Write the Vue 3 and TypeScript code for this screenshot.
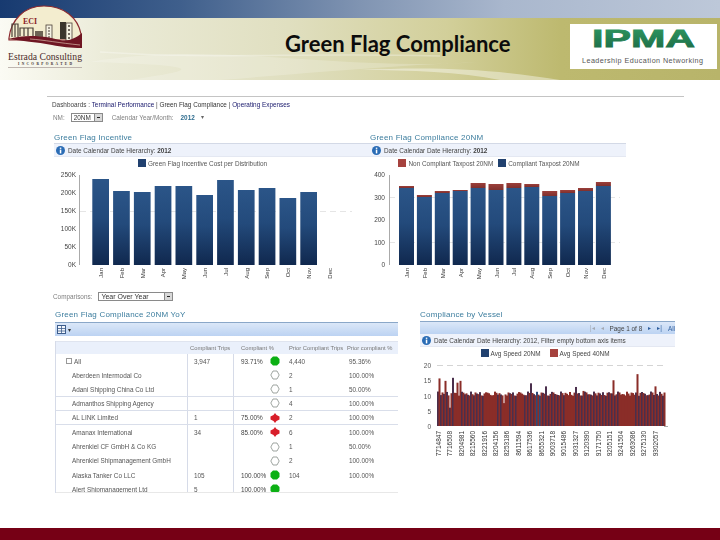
<script setup lang="ts">
const months = ['Jan', 'Feb', 'Mar', 'Apr', 'May', 'Jun', 'Jul', 'Aug', 'Sep', 'Oct', 'Nov', 'Dec'];

const baseY = 265;

// tops read off the reference, page coordinates
const incentive = [179, 191, 192, 186, 186, 195, 180, 190, 188, 198, 192].map((top, i) => ({
	x: 92.3 + i * 20.8,
	top,
	month: months[i],
}));

const complianceTop = [186, 195, 191, 190, 183, 184, 183, 184, 191, 190, 188, 182];
const complianceMid = [188, 197, 193, 191, 188, 190, 188, 187, 196, 193, 191, 186];
const compliance = months.map((month, i) => ({
	x: 399 + i * 17.9,
	top: complianceTop[i],
	mid: complianceMid[i],
	month,
}));

const vesselBase = 428;
const vesselScale = 3.05;
const spikesRed: Record<number, number> = { 0: 15.6, 2: 14.8, 6: 14.2, 7: 14.8, 48: 11.5, 58: 15, 66: 17, 72: 13 };
const spikesBlue: Record<number, number> = { 4: 6, 5: 15.8, 22: 7.5, 31: 14, 36: 13, 46: 12.8 };
const redPatches = [6, 7, 16, 17, 18, 19, 22, 23, 27, 28, 43, 44, 45, 61, 62, 63, 64, 65];
const vessels = Array.from({ length: 76 }, (_, i) => {
	const red = spikesRed[i] ?? 10.5 + Math.sin(i * 1.7) * 0.5;
	const blue = spikesBlue[i] ?? 10.6 + Math.cos(i * 2.3) * 0.7;
	let blueColor = '#4a2f4c';
	if (i === 33 || i === 34) blueColor = '#2b4a78';
	if (redPatches.includes(i)) blueColor = '#8a2d28';
	return {
		x: 437 + i * 3,
		redH: red * vesselScale,
		blueH: blue * vesselScale,
		blueColor,
	};
});
const vesselLabels = [
	'7714847', '7716508', '8204981', '8215560', '8221916', '8204156', '8253186', '8611594', '8617536', '8655321',
	'9003718', '9015486', '9031327', '9120390', '9171750', '9205151', '9241504', '9263086', '9275130', '9302057',
].map((text, i) => ({ text, x: 441 + i * 11.4 }));

type Status = 'green' | 'red' | 'none';
const rows: { name: string; trips: string; pct: string; status: Status; prior: string; priorPct: string; line?: boolean }[] = [
	{ name: 'All', trips: '3,947', pct: '93.71%', status: 'green', prior: '4,440', priorPct: '95.36%' },
	{ name: 'Aberdeen Intermodal Co', trips: '', pct: '', status: 'none', prior: '2', priorPct: '100.00%' },
	{ name: 'Adani Shipping China Co Ltd', trips: '', pct: '', status: 'none', prior: '1', priorPct: '50.00%', line: true },
	{ name: 'Admanthos Shipping Agency', trips: '', pct: '', status: 'none', prior: '4', priorPct: '100.00%', line: true },
	{ name: 'AL LINK Limited', trips: '1', pct: '75.00%', status: 'red', prior: '2', priorPct: '100.00%', line: true },
	{ name: 'Amanax International', trips: '34', pct: '85.00%', status: 'red', prior: '6', priorPct: '100.00%' },
	{ name: 'Ahrenkiel CF GmbH & Co KG', trips: '', pct: '', status: 'none', prior: '1', priorPct: '50.00%' },
	{ name: 'Ahrenkiel Shipmanagement GmbH', trips: '', pct: '', status: 'none', prior: '2', priorPct: '100.00%' },
	{ name: 'Alaska Tanker Co LLC', trips: '105', pct: '100.00%', status: 'green', prior: '104', priorPct: '100.00%' },
	{ name: 'Alert Shipmanagement Ltd', trips: '5', pct: '100.00%', status: 'green', prior: '', priorPct: '' },
];
</script>

<template>
	<div class="slide">
		<div class="top-band"></div>
		<header class="banner">
			<svg class="waves" width="720" height="62" viewBox="0 18 720 62">
				<path d="M90 62 C220 40 330 72 480 62 C380 66 300 74 220 80 L130 80 C180 72 230 66 90 62Z" fill="#fff" opacity="0.2" />
				<path d="M360 70 C440 66 500 70 560 80 L500 80 C460 72 410 70 360 70Z" fill="#fff" opacity="0.4" />
				<path d="M100 52 C220 60 300 52 440 56" fill="none" stroke="#fff" stroke-width="1.5" opacity="0.3" />
			</svg>
			<svg class="logo" width="100" height="72" viewBox="0 0 100 72">
				<path d="M9 38 C11 20 24 6 44 6 C64 6 78 18 81 34 L81 40 L9 40Z" fill="#f3edcf" stroke="#8c2a30" stroke-width="1.2" />
				<text x="30" y="24" class="logo-eci">ECI</text>
				<path d="M12 37 V24 H15 V37 M15 24 H18 V37" fill="none" stroke="#4a4038" stroke-width="1.2" />
				<path d="M20 36 V28 H33 V36 M24 28 V36 M28 28 V36" fill="none" stroke="#4a4038" stroke-width="1.2" />
				<rect x="35" y="31" width="8" height="6" fill="#6d6354" />
				<rect x="46" y="25" width="6" height="16" fill="#f5f2e2" stroke="#4a4038" stroke-width="0.8" />
				<path d="M48 28 h2 M48 31 h2 M48 34 h2 M48 37 h2" stroke="#4a4038" stroke-width="1.2" />
				<rect x="60" y="22" width="6" height="17" fill="#3a352c" />
				<rect x="66" y="23" width="6" height="18" fill="#f5f2e2" stroke="#4a4038" stroke-width="0.8" />
				<path d="M68 26 h2 M68 30 h2 M68 34 h2 M68 38 h2" stroke="#4a4038" stroke-width="1.4" />
				<path d="M8 39 C28 33 50 37 60 40 C68 42 76 38 82 33 L82 48 C70 48 62 47 52 45 C36 42 22 41 8 39Z" fill="#6f1623" />
				<path d="M30 39 C44 40 60 43 80 45" fill="none" stroke="#d9b9a8" stroke-width="0.7" />
				<text x="8" y="59.500" textLength="74" lengthAdjust="spacingAndGlyphs" class="logo-name">Estrada Consulting</text>
				<text x="18" y="64.500" textLength="54" class="logo-inc">INCORPORATED</text>
				<line x1="8" y1="67.500" x2="82" y2="67.500" stroke="#b0a59f" stroke-width="0.8" />
			</svg>
			<h1 class="title">Green Flag Compliance</h1>
			<div class="ipma">
				<svg width="147" height="45" viewBox="570 24 147 45">
					<defs>
						<linearGradient id="ipmaFill" x1="0" y1="0" x2="0" y2="1">
							<stop offset="0" stop-color="#2f9a62" />
							<stop offset="1" stop-color="#1c6a45" />
						</linearGradient>
					</defs>
					<text x="592" y="46.500" textLength="103" lengthAdjust="spacingAndGlyphs" class="ipma-mark" fill="url(#ipmaFill)" stroke="url(#ipmaFill)" stroke-width="0.8">IPMA</text>
					<text x="582" y="63" textLength="121" class="ipma-sub">Leadership Education Networking</text>
				</svg>
			</div>
		</header>

		<main class="content">
			<section class="dashboard">
				<nav class="crumbs">
					Dashboards :
					<a>Terminal Performance</a> |
					<span>Green Flag Compliance</span> |
					<a>Operating Expenses</a>
				</nav>
				<div class="filters">
					<span class="filter-label">NM:</span>
					<div class="select select-nm"><span>20NM</span><i class="select-btn"></i></div>
					<span class="filter-label month-label">Calendar Year/Month:</span>
					<span class="filter-value">2012</span>
					<span class="filter-arrow">▾</span>
				</div>

				<div class="chart-row">
					<div class="panel panel-incentive">
						<h2>Green Flag Incentive</h2>
						<div class="info info-wide">
							<svg class="info-icon" width="9" height="9" viewBox="0 0 9 9">
								<circle cx="4.500" cy="4.500" r="4.500" fill="#2a6cb5" />
								<rect x="3.800" y="3.600" width="1.500" height="3.800" fill="#fff" />
								<rect x="3.800" y="1.600" width="1.500" height="1.300" fill="#fff" />
							</svg>
							<span>Date Calendar Date Hierarchy: <b>2012</b></span>
						</div>
						<div class="legend legend-incentive">
							<i class="swatch swatch-blue"></i>Green Flag Incentive Cost per Distribution
						</div>
						<svg width="316" height="112" viewBox="54 168 316 112">
							<defs>
								<linearGradient id="barBlue" x1="0" y1="0" x2="0" y2="1">
									<stop offset="0" stop-color="#2b5588" />
									<stop offset="0.45" stop-color="#234a7b" />
									<stop offset="1" stop-color="#10284e" />
								</linearGradient>
								<linearGradient id="barRed" x1="0" y1="0" x2="0" y2="1">
									<stop offset="0" stop-color="#9c3f3a" />
									<stop offset="1" stop-color="#7e302e" />
								</linearGradient>
							</defs>
							<line x1="80" y1="211.500" x2="352" y2="211.500" class="grid-line" />
							<line x1="79.500" y1="175" x2="79.500" y2="265" class="axis-line" />
							<text v-for="(label, i) in ['0K', '50K', '100K', '150K', '200K', '250K']" :key="label" x="76" :y="267 - i * 18" class="tick">{{ label }}</text>
							<rect v-for="bar in incentive" :key="bar.month" :x="bar.x" :y="bar.top" width="16.700" :height="baseY - bar.top" fill="url(#barBlue)" />
							<text
								v-for="(month, i) in months"
								:key="month"
								class="month"
								:transform="`translate(${103 + i * 20.8} 268) rotate(-90)`"
							>{{ month }}</text>
						</svg>
					</div>

					<div class="panel panel-compliance">
						<h2>Green Flag Compliance 20NM</h2>
						<div class="info info-wide">
							<svg class="info-icon" width="9" height="9" viewBox="0 0 9 9">
								<circle cx="4.500" cy="4.500" r="4.500" fill="#2a6cb5" />
								<rect x="3.800" y="3.600" width="1.500" height="3.800" fill="#fff" />
								<rect x="3.800" y="1.600" width="1.500" height="1.300" fill="#fff" />
							</svg>
							<span>Date Calendar Date Hierarchy: <b>2012</b></span>
						</div>
						<div class="legend legend-compliance">
							<i class="swatch swatch-red"></i>Non Compliant Taxpost 20NM
							<i class="swatch swatch-blue swatch-second"></i>Compliant Taxpost 20NM
						</div>
						<svg width="256" height="112" viewBox="370 168 256 112">
							<line x1="389" y1="197.500" x2="620" y2="197.500" class="grid-line" />
							<line x1="389" y1="242.500" x2="620" y2="242.500" class="grid-line" />
							<line x1="389.500" y1="175" x2="389.500" y2="265" class="axis-line" />
							<text v-for="(label, i) in ['0', '100', '200', '300', '400']" :key="label" x="385" :y="267 - i * 22.500" class="tick">{{ label }}</text>
							<g v-for="bar in compliance" :key="bar.month">
								<rect :x="bar.x" :y="bar.top" width="15" :height="bar.mid - bar.top" fill="url(#barRed)" />
								<rect :x="bar.x" :y="bar.mid" width="15" :height="baseY - bar.mid" fill="url(#barBlue)" />
							</g>
							<text
								v-for="(month, i) in months"
								:key="month"
								class="month"
								:transform="`translate(${409 + i * 17.9} 268) rotate(-90)`"
							>{{ month }}</text>
						</svg>
					</div>
				</div>

				<div class="filters compare">
					<span class="filter-label">Comparisons:</span>
					<div class="select select-compare"><span>Year Over Year</span><i class="select-btn"></i></div>
				</div>

				<div class="detail-row">
					<div class="panel panel-table">
						<h2>Green Flag Compliance 20NM YoY</h2>
						<div class="toolbar">
							<svg width="9" height="9" viewBox="0 0 9 9">
								<rect x="0.500" y="0.500" width="8" height="8" fill="#f4f7fc" stroke="#3d5d8c" />
								<path d="M0.500 3.500 H8.500 M0.500 6 H8.500 M4.500 0.500 V8.500" stroke="#3d5d8c" stroke-width="0.8" />
							</svg>
							<span class="toolbar-caret">▾</span>
						</div>
						<div class="grid-table">
							<div class="grid-head">
								<span></span>
								<span>Compliant Trips</span>
								<span class="head-pct">Compliant %</span>
								<span>Prior Compliant Trips</span>
								<span>Prior compliant %</span>
							</div>
							<div class="grid-body">
								<div v-for="row in rows" :key="row.name" class="grid-row" :class="{ 'has-line': row.line }">
									<span class="cell-name">
										<i v-if="row.name === 'All'" class="tree-box"></i>{{ row.name }}
									</span>
									<span class="cell-trips">{{ row.trips }}</span>
									<span class="cell-pct">
										<span class="pct-text">{{ row.pct }}</span>
										<svg class="status" width="10" height="10" viewBox="0 0 10 10">
											<polygon v-if="row.status === 'green'" points="3,0.500 7,0.500 9.500,3 9.500,7 7,9.500 3,9.500 0.500,7 0.500,3" fill="#0cb014" />
											<polygon v-else-if="row.status === 'red'" points="5,0 6.500,2 9.500,3.500 9.500,6.500 6.500,8 5,10 3.500,8 0.500,6.500 0.500,3.500 3.500,2" fill="#d81e2a" />
											<polygon v-else points="3,1 7,1 9.200,5 7,9 3,9 0.800,5" fill="#fff" stroke="#77807a" stroke-width="0.7" />
										</svg>
									</span>
									<span class="cell-prior">{{ row.prior }}</span>
									<span class="cell-prior-pct">{{ row.priorPct }}</span>
								</div>
							</div>
						</div>
					</div>

					<div class="panel panel-vessel">
						<h2>Compliance by Vessel</h2>
						<div class="toolbar pager">
							<span class="pager-off">|◂</span>
							<span class="pager-off">◂</span>
							<span>Page 1 of 8</span>
							<span class="pager-on">▸</span>
							<span class="pager-on">▸|</span>
							<span class="pager-on">All</span>
						</div>
						<div class="info info-vessel">
							<svg class="info-icon" width="9" height="9" viewBox="0 0 9 9">
								<circle cx="4.500" cy="4.500" r="4.500" fill="#2a6cb5" />
								<rect x="3.800" y="3.600" width="1.500" height="3.800" fill="#fff" />
								<rect x="3.800" y="1.600" width="1.500" height="1.300" fill="#fff" />
							</svg>
							<span>Date Calendar Date Hierarchy: 2012, Filter empty bottom axis items</span>
						</div>
						<div class="legend legend-vessel">
							<i class="swatch swatch-blue"></i>Avg Speed 20NM
							<i class="swatch swatch-red swatch-third"></i>Avg Speed 40NM
						</div>
						<svg width="255" height="100" viewBox="420 360 255 100">
							<line x1="437" y1="367.500" x2="664" y2="367.500" class="grid-line grid-line-dark" />
							<line x1="664" y1="428.500" x2="668" y2="428.500" class="axis-line" />
							<text v-for="(label, i) in ['0', '5', '10', '15', '20']" :key="label" x="431" :y="431 - i * 15.250" class="tick tick-vessel">{{ label }}</text>
							<g v-for="v in vessels" :key="v.x">
								<rect :x="v.x" :y="vesselBase - v.blueH" width="2" :height="v.blueH" :fill="v.blueColor" />
								<rect :x="v.x + 1.500" :y="vesselBase - v.redH" width="2" :height="v.redH" fill="#8a2d28" />
							</g>
							<text
								v-for="label in vesselLabels"
								:key="label.text"
								class="month month-vessel"
								:transform="`translate(${label.x} 433) rotate(-90)`"
							>{{ label.text }}</text>
						</svg>
					</div>
				</div>
			</section>
		</main>

		<footer class="bottom-bar"></footer>
	</div>
</template>

<style scoped>
.slide {
	width: 720px;
	height: 540px;
	display: flex;
	flex-direction: column;
	background: #fff;
	overflow: hidden;
	font-family: "Liberation Sans", Arial, sans-serif;
}

.top-band {
	height: 18px;
	background: linear-gradient(90deg, #173a70 0%, #3f5f8c 25%, #8094b2 50%, #a9b7cd 70%, #bdc8d9 100%);
}

.banner {
	position: relative;
	height: 62px;
	display: flex;
	align-items: center;
	background: linear-gradient(90deg, #fbfbf4 0%, #ebebd8 15%, #e0dfc0 40%, #d2cf9a 62%, #bdb96f 78%, #b8b46a 100%);
}

.waves {
	position: absolute;
	left: 0;
	top: 0;
}

.logo {
	position: absolute;
	left: 0;
	top: -18px;
}

.logo-eci {
	font: bold 8px "Liberation Serif", serif;
	fill: #8c1f28;
	text-anchor: middle;
}

.logo-name {
	font: 10.500px "Liberation Serif", serif;
	fill: #4b2b2b;
}

.logo-inc {
	font: bold 3.500px "Liberation Serif", serif;
	fill: #3a2b2b;
}

.title {
	position: relative;
	margin: -11px 0 0 285px;
	width: 240px;
	font: bold 22px Lato, "Open Sans", sans-serif;
	color: #0c0c0c;
	white-space: nowrap;
}

.ipma {
	position: absolute;
	left: 570px;
	top: 6px;
	width: 147px;
	height: 45px;
	background: #fff;
}

.ipma svg {
	display: block;
}

.ipma-mark {
	font: bold 24px "Liberation Sans", Arial, sans-serif;
}

.ipma-sub {
	font: 7.200px "Liberation Sans", Arial, sans-serif;
	fill: #555;
}

.content {
	flex: 1;
	padding: 16px 0 0 47px;
}

.dashboard {
	width: 637px;
	border-top: 1px solid #c4c4c4;
	font-size: 6.400px;
	color: #555;
	filter: blur(0.4px);
}

.crumbs {
	height: 15px;
	line-height: 15px;
	padding-left: 5px;
	color: #444;
}

.crumbs a {
	color: #17176b;
}

.crumbs span {
	color: #333;
}

.filters {
	display: flex;
	align-items: center;
	height: 10px;
	padding-left: 6px;
}

.filter-label {
	color: #808080;
}

.select {
	display: flex;
	align-items: center;
	justify-content: space-between;
	height: 9px;
	box-sizing: border-box;
	border: 1px solid #8a8a8a;
	padding-left: 2px;
	color: #333;
	background: #fff;
}

.select-nm {
	width: 32px;
	margin-left: 6px;
}

.select-btn {
	display: block;
	width: 7px;
	height: 7px;
	background: #d8d8d8;
	border-left: 1px solid #888;
	position: relative;
}

.select-btn::after {
	content: "";
	position: absolute;
	left: 2px;
	top: 3px;
	width: 3px;
	height: 1px;
	background: #222;
}

.month-label {
	margin-left: 9px;
}

.filter-value {
	margin-left: 7px;
	color: #2f6d8f;
	font-weight: bold;
}

.filter-arrow {
	margin-left: 6px;
	color: #666;
}

.chart-row {
	display: flex;
	margin-top: 9px;
	padding-left: 7px;
}

.panel h2 {
	margin: 0;
	height: 12px;
	line-height: 13px;
	font-size: 8px;
	font-weight: normal;
	letter-spacing: 0.2px;
	color: #3c7d9e;
	white-space: nowrap;
}

.panel-incentive {
	width: 316px;
}

.panel-compliance {
	width: 256px;
}

.panel svg {
	display: block;
}

.info {
	display: flex;
	align-items: center;
	gap: 3px;
	box-sizing: border-box;
	height: 14px;
	padding-left: 2px;
	background: #eef2fb;
	border-top: 1px solid #d3d9e6;
	border-bottom: 1px solid #e4e8f2;
	color: #444;
	white-space: nowrap;
}

.info-wide {
	width: 100%;
}

.info-icon {
	flex: none;
}

.legend {
	display: flex;
	align-items: center;
	justify-content: center;
	height: 11px;
	padding-top: 1px;
	box-sizing: border-box;
	color: #555;
	white-space: nowrap;
}

.legend-incentive {
	width: 297px;
}

.legend-compliance {
	padding-right: 18px;
}

.swatch {
	display: block;
	width: 8px;
	height: 8px;
	margin-right: 2px;
}

.swatch-blue {
	background: #21416f;
}

.swatch-red {
	background: #a6423e;
}

.swatch-second {
	margin-left: 5px;
}

.swatch-third {
	margin-left: 9px;
}

.grid-line {
	stroke: #dedede;
	stroke-width: 0.8;
	stroke-dasharray: 6 4;
}

.grid-line-dark {
	stroke: #c9c9c9;
}

.axis-line {
	stroke: #aaa;
	stroke-width: 1;
}

.tick {
	font-size: 6.500px;
	fill: #444;
	text-anchor: end;
}

.tick-vessel {
	fill: #555;
}

.month {
	font-size: 6px;
	fill: #333;
	text-anchor: end;
}

.month-vessel {
	font-size: 6.500px;
}

.compare {
	margin-top: 11px;
}

.select-compare {
	width: 75px;
	margin-left: 6px;
	font-size: 7px;
}

.detail-row {
	display: flex;
	margin-top: 7px;
	padding-left: 8px;
}

.panel-table {
	width: 365px;
}

.panel-vessel {
	width: 255px;
}

.toolbar {
	display: flex;
	align-items: center;
	box-sizing: border-box;
	background: linear-gradient(180deg, #dbe7f8 0%, #bcd3f2 100%);
	border-top: 1px solid #8aa7c8;
}

.panel-table .toolbar {
	width: 343px;
	height: 14px;
	margin-top: 2px;
	padding-left: 2px;
	gap: 2px;
	color: #333;
}

.grid-table {
	width: 343px;
	margin-top: 5px;
	border-left: 1px solid #d6dbe8;
	box-sizing: border-box;
}

.grid-head,
.grid-row {
	display: grid;
	grid-template-columns: 132px 46px 53px 58px 1fr;
}

.grid-head {
	height: 13px;
	align-items: center;
	background: #eaf0fb;
	border-top: 1px solid #dfe4ef;
	box-sizing: border-box;
	color: #777;
	font-size: 5.800px;
	white-space: nowrap;
}

.grid-head span {
	padding-left: 2px;
	overflow: hidden;
}

.grid-head .head-pct {
	padding-left: 7px;
}

.grid-body {
	height: 137.500px;
	overflow: hidden;
	border-bottom: 1px solid #e8e8e8;
}

.grid-row {
	height: 14.250px;
	box-sizing: border-box;
	align-items: center;
	color: #555;
	white-space: nowrap;
}

.grid-row.has-line {
	border-bottom: 1px solid #d9deea;
}

.grid-row > span {
	display: flex;
	align-items: center;
	height: 100%;
	box-sizing: border-box;
}

.cell-name {
	padding-left: 16px;
	border-right: 1px solid #d6dbe8;
}

.tree-box {
	display: block;
	width: 4px;
	height: 4px;
	margin-left: -6px;
	margin-right: 2px;
	border: 1px solid #999;
}

.cell-trips {
	padding-left: 6px;
	border-right: 1px solid #d6dbe8;
}

.cell-pct {
	padding-left: 7px;
}

.pct-text {
	width: 29px;
	color: #444;
}

.status {
	flex: none;
}

.cell-prior {
	padding-left: 2px;
}

.cell-prior-pct {
	padding-left: 4px;
}

.pager {
	justify-content: flex-end;
	gap: 6px;
	height: 13px;
	margin-top: 1px;
	padding-right: 0;
	color: #444;
	overflow: hidden;
}

.pager-off {
	color: #a4a9b3;
}

.pager-on {
	color: #2f5f9e;
}

.info-vessel {
	height: 13px;
	border-top: 0;
}

.legend-vessel {
	height: 11px;
	color: #444;
	padding-right: 5px;
}

.bottom-bar {
	height: 12px;
	background: #760015;
}
</style>
